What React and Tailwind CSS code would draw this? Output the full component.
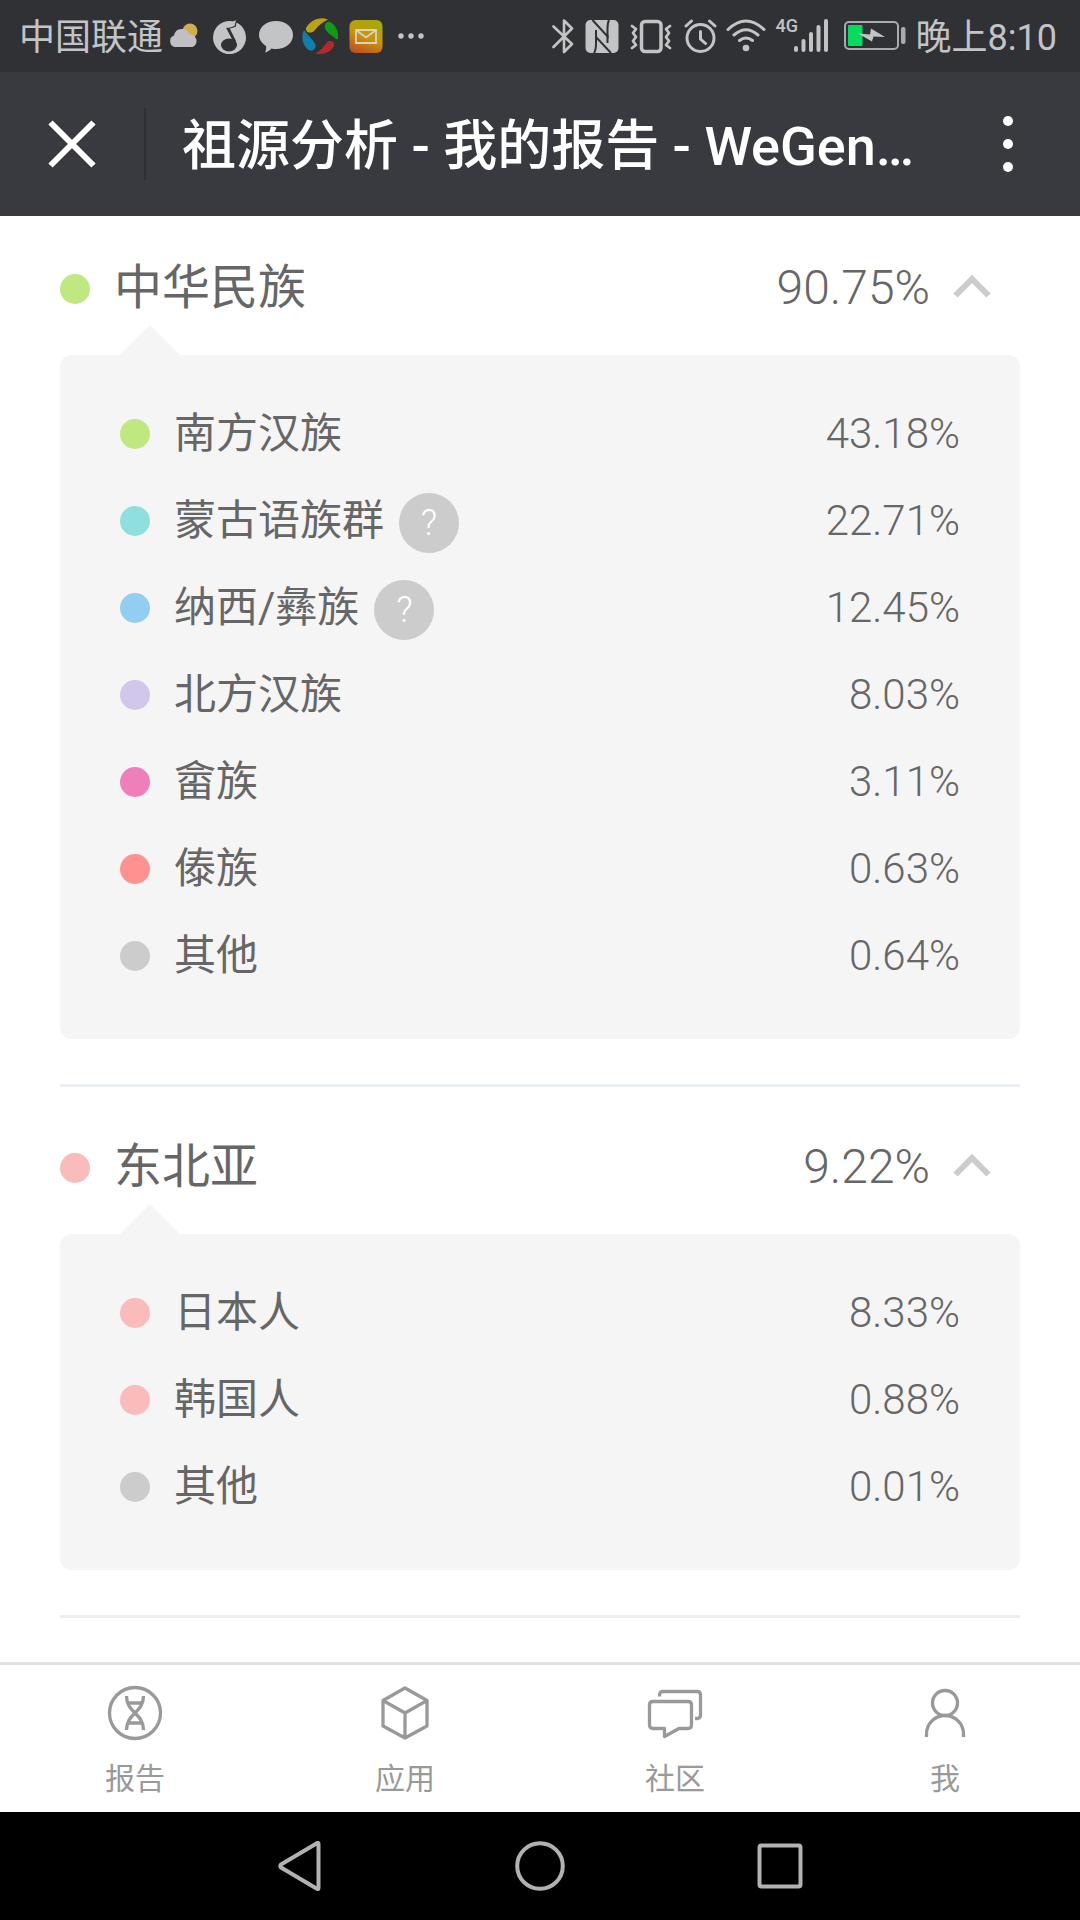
import { useState } from 'react';

const groups = [
  {
    name: '中华民族',
    value: '90.75%',
    dot: 'bg-[#c0e881]',
    items: [
      { name: '南方汉族', value: '43.18%', dot: 'bg-[#c0e881]' },
      { name: '蒙古语族群', value: '22.71%', dot: 'bg-[#90dfdf]', help: true },
      { name: '纳西/彝族', value: '12.45%', dot: 'bg-[#92cdf2]', help: true },
      { name: '北方汉族', value: '8.03%', dot: 'bg-[#d1c6ec]' },
      { name: '畲族', value: '3.11%', dot: 'bg-[#ef7fbb]' },
      { name: '傣族', value: '0.63%', dot: 'bg-[#ff9191]' },
      { name: '其他', value: '0.64%', dot: 'bg-[#cccccc]' },
    ],
  },
  {
    name: '东北亚',
    value: '9.22%',
    dot: 'bg-[#fabbbb]',
    items: [
      { name: '日本人', value: '8.33%', dot: 'bg-[#fabbbb]' },
      { name: '韩国人', value: '0.88%', dot: 'bg-[#fabbbb]' },
      { name: '其他', value: '0.01%', dot: 'bg-[#cccccc]' },
    ],
  },
];

const StatusBar = () => (
  <div className="flex h-[72px] items-center justify-between bg-[#303135] pl-[19px] pr-[23px] text-[36px] font-normal leading-[48px] text-[#c3c4c6]">
    <div className="flex items-center">
      <span className="pt-1">中国联通</span>
      {/* Clima */}
      <svg className="ml-1.5 h-9 w-[30px]" viewBox="0 0 30 36">
        <circle cx="21" cy="13" r="7.500" fill="#cfae4b" />
        <path d="M6 29a6 6 0 0 1-1-11.500a8 8 0 0 1 15.500-1a6.500 6.500 0 0 1 3 12.500z" fill="#c0c0c4" />
      </svg>
      {/* Música */}
      <svg className="ml-[13px] h-9 w-9" viewBox="0 0 36 36">
        <circle cx="17.500" cy="19.500" r="16.500" fill="#c3c4c6" />
        <path d="M24 2L23 8L15.500 10.500L21.500 22" fill="#c3c4c6" stroke="#303135" strokeWidth="1.800" />
        <path d="M15 10l2-1l7 14l-1 3l-2-4z" fill="#303135" />
        <path d="M13 8Q16 6 24 2L22.500 8L16.500 10z" fill="#c3c4c6" />
        <ellipse cx="17" cy="27" rx="8" ry="6.500" fill="#303135" />
        <path d="M8 33Q17 39 27 33Q17 35 8 33z" fill="#c3c4c6" />
      </svg>
      {/* Mensajes */}
      <svg className="ml-[11px] h-9 w-[34px]" viewBox="0 0 34 36">
        <path d="M17 3c9.500 0 17 6 17 14s-7.500 14-17 14c-1.500 0-3 0-4.500-.5c-2 2-4 3.500-6.500 4c1-2 1.500-4 1-6.500C3 25.500 0 21.500 0 17C0 9 7.500 3 17 3z" fill="#c3c4c6" />
      </svg>
      {/* Navegador */}
      <svg className="ml-[9px] h-9 w-9" viewBox="0 0 36 36">
        <path d="M26 1.500C17-2 8 3 4 10c-1 4 5 7 9 2c4-5 8-8 13-10.500z" fill="#baa312" />
        <path d="M28 4c6 3 9 10 8 17c-1 1-2 0-3-1c-4-3-9-6-10-10c-1-4 2-7 5-6z" fill="#0f9a17" />
        <path d="M13 35.500c8 2 17-2 19-8c1-4-4-6-7-3c-4 5-7 9-12 11z" fill="#b4292c" />
        <path d="M2 12c-4 8 0 18 6 20.500c4 1 7-3 5-7c-3-5-7-8-11-13.500z" fill="#107fae" />
      </svg>
      {/* Correo */}
      <svg className="ml-[11px] h-9 w-[34px]" viewBox="0 0 34 36">
        <defs>
          <linearGradient id="mail" x1="0.7" y1="0" x2="0.3" y2="1">
            <stop offset="0" stopColor="#a2aa10" />
            <stop offset="0.5" stopColor="#c9960c" />
            <stop offset="1" stopColor="#bd5322" />
          </linearGradient>
        </defs>
        <rect x="0.5" y="2" width="33" height="33" rx="6" fill="url(#mail)" />
        <path d="M7 12h20v13H7zM7.500 12.500l9.500 7l9.500-7" fill="none" stroke="#d9d3bc" strokeWidth="1.800" />
      </svg>
      <svg className="ml-[15px] h-9 w-7" viewBox="0 0 28 36" fill="#c3c4c6">
        <circle cx="3" cy="18" r="2.700" />
        <circle cx="13" cy="18" r="2.700" />
        <circle cx="23" cy="18" r="2.700" />
      </svg>
    </div>

    <div className="flex items-center">
      {/* Bluetooth */}
      <svg className="h-9 w-[22px]" viewBox="0 0 22 36">
        <path d="M1.500 8.500L20 26l-8 8V2.500l8 8L1.500 29" fill="none" stroke="#c3c4c6" strokeWidth="2.600" strokeLinejoin="round" strokeLinecap="round" />
      </svg>
      {/* NFC */}
      <svg className="ml-[11px] h-9 w-[34px]" viewBox="0 0 34 36">
        <rect x="0.500" y="2" width="33" height="33" rx="5" fill="#c3c4c6" />
        <path d="M7.500 2L22.500 18.500V11Q22.500 5 24 2M26 35L11 19v7q0 6-2 9" fill="none" stroke="#303135" strokeWidth="2" />
        <path d="M11 12v8M22.500 17v8" fill="none" stroke="#303135" strokeWidth="2" />
      </svg>
      {/* Vibración */}
      <svg className="ml-[11px] h-9 w-[42px]" viewBox="0 0 42 36" fill="none" stroke="#c3c4c6" strokeLinejoin="round" strokeLinecap="round">
        <rect x="11.500" y="3.500" width="19.500" height="30" rx="3.500" strokeWidth="3.500" />
        <path d="M2 8l4 3l-3 4l3 4l-3 4l3 4l-4 3M40 8l-4 3l3 4l-3 4l3 4l-3 4l4 3" strokeWidth="2.800" />
      </svg>
      {/* Alarma */}
      <svg className="ml-3 h-9 w-[34px]" viewBox="0 0 34 36" fill="none" stroke="#c3c4c6" strokeWidth="3" strokeLinecap="round">
        <circle cx="16.500" cy="20" r="13.500" />
        <path d="M2 8l5.500-5M31 8l-5.500-5M16.500 13.500V21l5 4.500" />
      </svg>
      {/* Wifi */}
      <svg className="ml-2 h-9 w-10" viewBox="0 0 40 36" fill="none" stroke="#c3c4c6" strokeWidth="3" strokeLinecap="round">
        <path d="M2 11.500q18-17 36 0M8 17q12-10.500 24 0M13.500 22.500q6.500-5 13 0" />
        <circle cx="20" cy="30" r="3.300" fill="#c3c4c6" stroke="none" />
      </svg>
      <span className="ml-2.5 w-[18px] self-start pt-1 text-[18px] font-medium leading-6">4G</span>
      {/* Señal */}
      <svg className="h-9 w-[34px]" viewBox="0 0 34 36" fill="none" stroke="#c3c4c6" strokeWidth="4" strokeLinecap="round">
        <path d="M2 30v2M9.500 23v9M17 16v16M24.500 9v23M32 3v29" />
      </svg>
      {/* Batería */}
      <svg className="ml-4 h-9 w-[62px]" viewBox="0 0 62 36">
        <rect x="1" y="4" width="53" height="27" rx="4" fill="none" stroke="#a9aaac" strokeWidth="2" />
        <rect x="4" y="7" width="14.500" height="21" rx="1" fill="#04db5f" />
        <rect x="57" y="9" width="4.500" height="17" rx="2" fill="#a9aaac" />
        <path d="M14 15.500l12 1l1-6l14 8.500l-11.500-.5l-1.500 5z" fill="#c3c4c6" />
      </svg>
      <span className="ml-2.5 pt-1">晚上8:10</span>
    </div>
  </div>
);

const Header = () => (
  <header className="flex h-36 items-center bg-[#393a3f] text-white">
    <button className="flex h-[72px] w-36 items-center justify-center" aria-label="关闭">
      <svg className="h-12 w-12" viewBox="0 0 48 48">
        <path d="M2.500 2.500l43 43M45.500 2.500l-43 43" stroke="#fff" strokeWidth="6" />
      </svg>
    </button>
    <h1 className="h-[72px] min-w-0 flex-1 truncate border-l-2 border-[#2e2f33] pl-9 text-[54px] font-medium leading-[78px]">
      祖源分析 - 我的报告 - WeGen…
    </h1>
    <button className="flex h-[72px] w-36 items-center justify-center" aria-label="更多">
      <svg className="h-14 w-3" viewBox="0 0 12 56" fill="#fff">
        <circle cx="6" cy="5" r="5" />
        <circle cx="6" cy="28" r="5" />
        <circle cx="6" cy="51" r="5" />
      </svg>
    </button>
  </header>
);

const Group = ({ group }) => {
  const [open, setOpen] = useState(true);

  return (
    <section className="border-b-3 border-[#ebeff3] pb-[45px] pt-[51px] first:pt-[43px]">
      <button
        onClick={() => setOpen(!open)}
        aria-expanded={open}
        className="flex h-[60px] w-full items-center pr-[29px] text-[48px] leading-[58px]"
      >
        <span className={`h-[30px] w-[30px] rounded-full ${group.dot}`} />
        <span className="ml-6 flex-1 self-start text-left font-normal">{group.name}</span>
        <span className="self-start">{group.value}</span>
        <svg className={`ml-[23px] h-7 w-[38px] ${open ? '' : 'rotate-180'}`} viewBox="0 0 38 28">
          <path d="M2.500 20.500L19 4L35.500 20.500" fill="none" stroke="#cccccc" strokeWidth="6" />
        </svg>
      </button>
      {open && (
        <div className="relative mt-9 rounded-xl bg-[#f5f5f5] px-[60px] pb-10 pt-[35px]">
          <svg className="absolute -top-[30px] left-[60px] h-[30px] w-[60px]" viewBox="0 0 60 30">
            <path d="M0 30L30 0L60 30z" fill="#f5f5f5" />
          </svg>
          <ul>
            {group.items.map((item) => (
              <li key={item.name} className="flex h-[87px] items-center text-[42px] leading-[60px]">
                <span className={`h-[30px] w-[30px] rounded-full ${item.dot}`} />
                <span className="ml-6 font-normal">{item.name}</span>
                {item.help && (
                  <button
                    className="ml-[15px] mt-1 h-[60px] w-[60px] rounded-full bg-[#cccccc] text-center text-[36px] leading-[60px] text-white"
                    aria-label={`${item.name}说明`}
                  >
                    ?
                  </button>
                )}
                <span className="ml-auto">{item.value}</span>
              </li>
            ))}
          </ul>
        </div>
      )}
    </section>
  );
};

const tabs = [
  {
    name: '报告',
    icon: (
      <>
        <circle cx="30" cy="30" r="25.500" />
        <path d="M21.500 13c0 17 17 17 17 34M38.500 13c0 17-17 17-17 34M23 20h14M23 40h14" />
      </>
    ),
  },
  {
    name: '应用',
    icon: (
      <path d="M30 5L52 17.500V43L30 55L8 43V17.500zM8 17.500L30 30L52 17.500M30 30V55" />
    ),
  },
  {
    name: '社区',
    icon: (
      <>
        <path d="M8 18.500h35q3.500 0 3.500 3.500v20q0 3.500-3.500 3.500H34L19.500 53.500V45.500H8q-3.500 0-3.500-3.500V22q0-3.500 3.500-3.500z" />
        <path d="M14.500 13.500v-1.500q0-3.500 3.500-3.500h34q3.500 0 3.500 3.500v20q0 3.500-3.500 3.500h-2" />
      </>
    ),
  },
  {
    name: '我',
    icon: (
      <>
        <circle cx="30" cy="20" r="12.500" />
        <path d="M11.500 54v-3a18.500 18.500 0 0 1 37 0v3" />
      </>
    ),
  },
];

const TabBar = () => (
  <nav className="flex h-[150px] border-t-3 border-[#dfe3e8] bg-white">
    {tabs.map((tab) => (
      <a key={tab.name} href="#" className="flex flex-1 flex-col items-center pt-[18px] text-[30px] font-normal leading-9 text-[#999999]">
        <svg className="h-[60px] w-[60px]" viewBox="0 0 60 60" fill="none" stroke="#999999" strokeWidth="3.300" strokeLinejoin="round">
          {tab.icon}
        </svg>
        <span className="mt-[18px]">{tab.name}</span>
      </a>
    ))}
  </nav>
);

const SystemNav = () => (
  <div className="flex h-[108px] items-center justify-center bg-black">
    <button className="flex w-60 justify-center" aria-label="返回">
      <svg className="h-[50px] w-11" viewBox="0 0 44 50">
        <path d="M40.500 3v44q0 2-2 .5L3 26.500q-1.500-1.500 0-3L38.500 2.500q2-1.500 2 .5z" fill="none" stroke="#b2b2b2" strokeWidth="4" strokeLinejoin="round" />
      </svg>
    </button>
    <button className="flex w-60 justify-center" aria-label="主页">
      <svg className="h-[50px] w-[50px]" viewBox="0 0 50 50">
        <circle cx="25" cy="25" r="22.800" fill="none" stroke="#b2b2b2" strokeWidth="4" />
      </svg>
    </button>
    <button className="flex w-60 justify-center" aria-label="最近任务">
      <svg className="h-[46px] w-[46px]" viewBox="0 0 46 46">
        <rect x="2.500" y="2.500" width="41" height="41" rx="2" fill="none" stroke="#b2b2b2" strokeWidth="4" />
      </svg>
    </button>
  </div>
);

const App = () => (
  <div className="flex min-h-screen flex-col bg-white font-['Roboto','Noto_Sans_CJK_SC',sans-serif] font-light text-[#666666]">
    <StatusBar />
    <Header />
    <main className="flex-1 px-[60px]">
      {groups.map((group) => (
        <Group key={group.name} group={group} />
      ))}
    </main>
    <TabBar />
    <SystemNav />
  </div>
);

export default App;
